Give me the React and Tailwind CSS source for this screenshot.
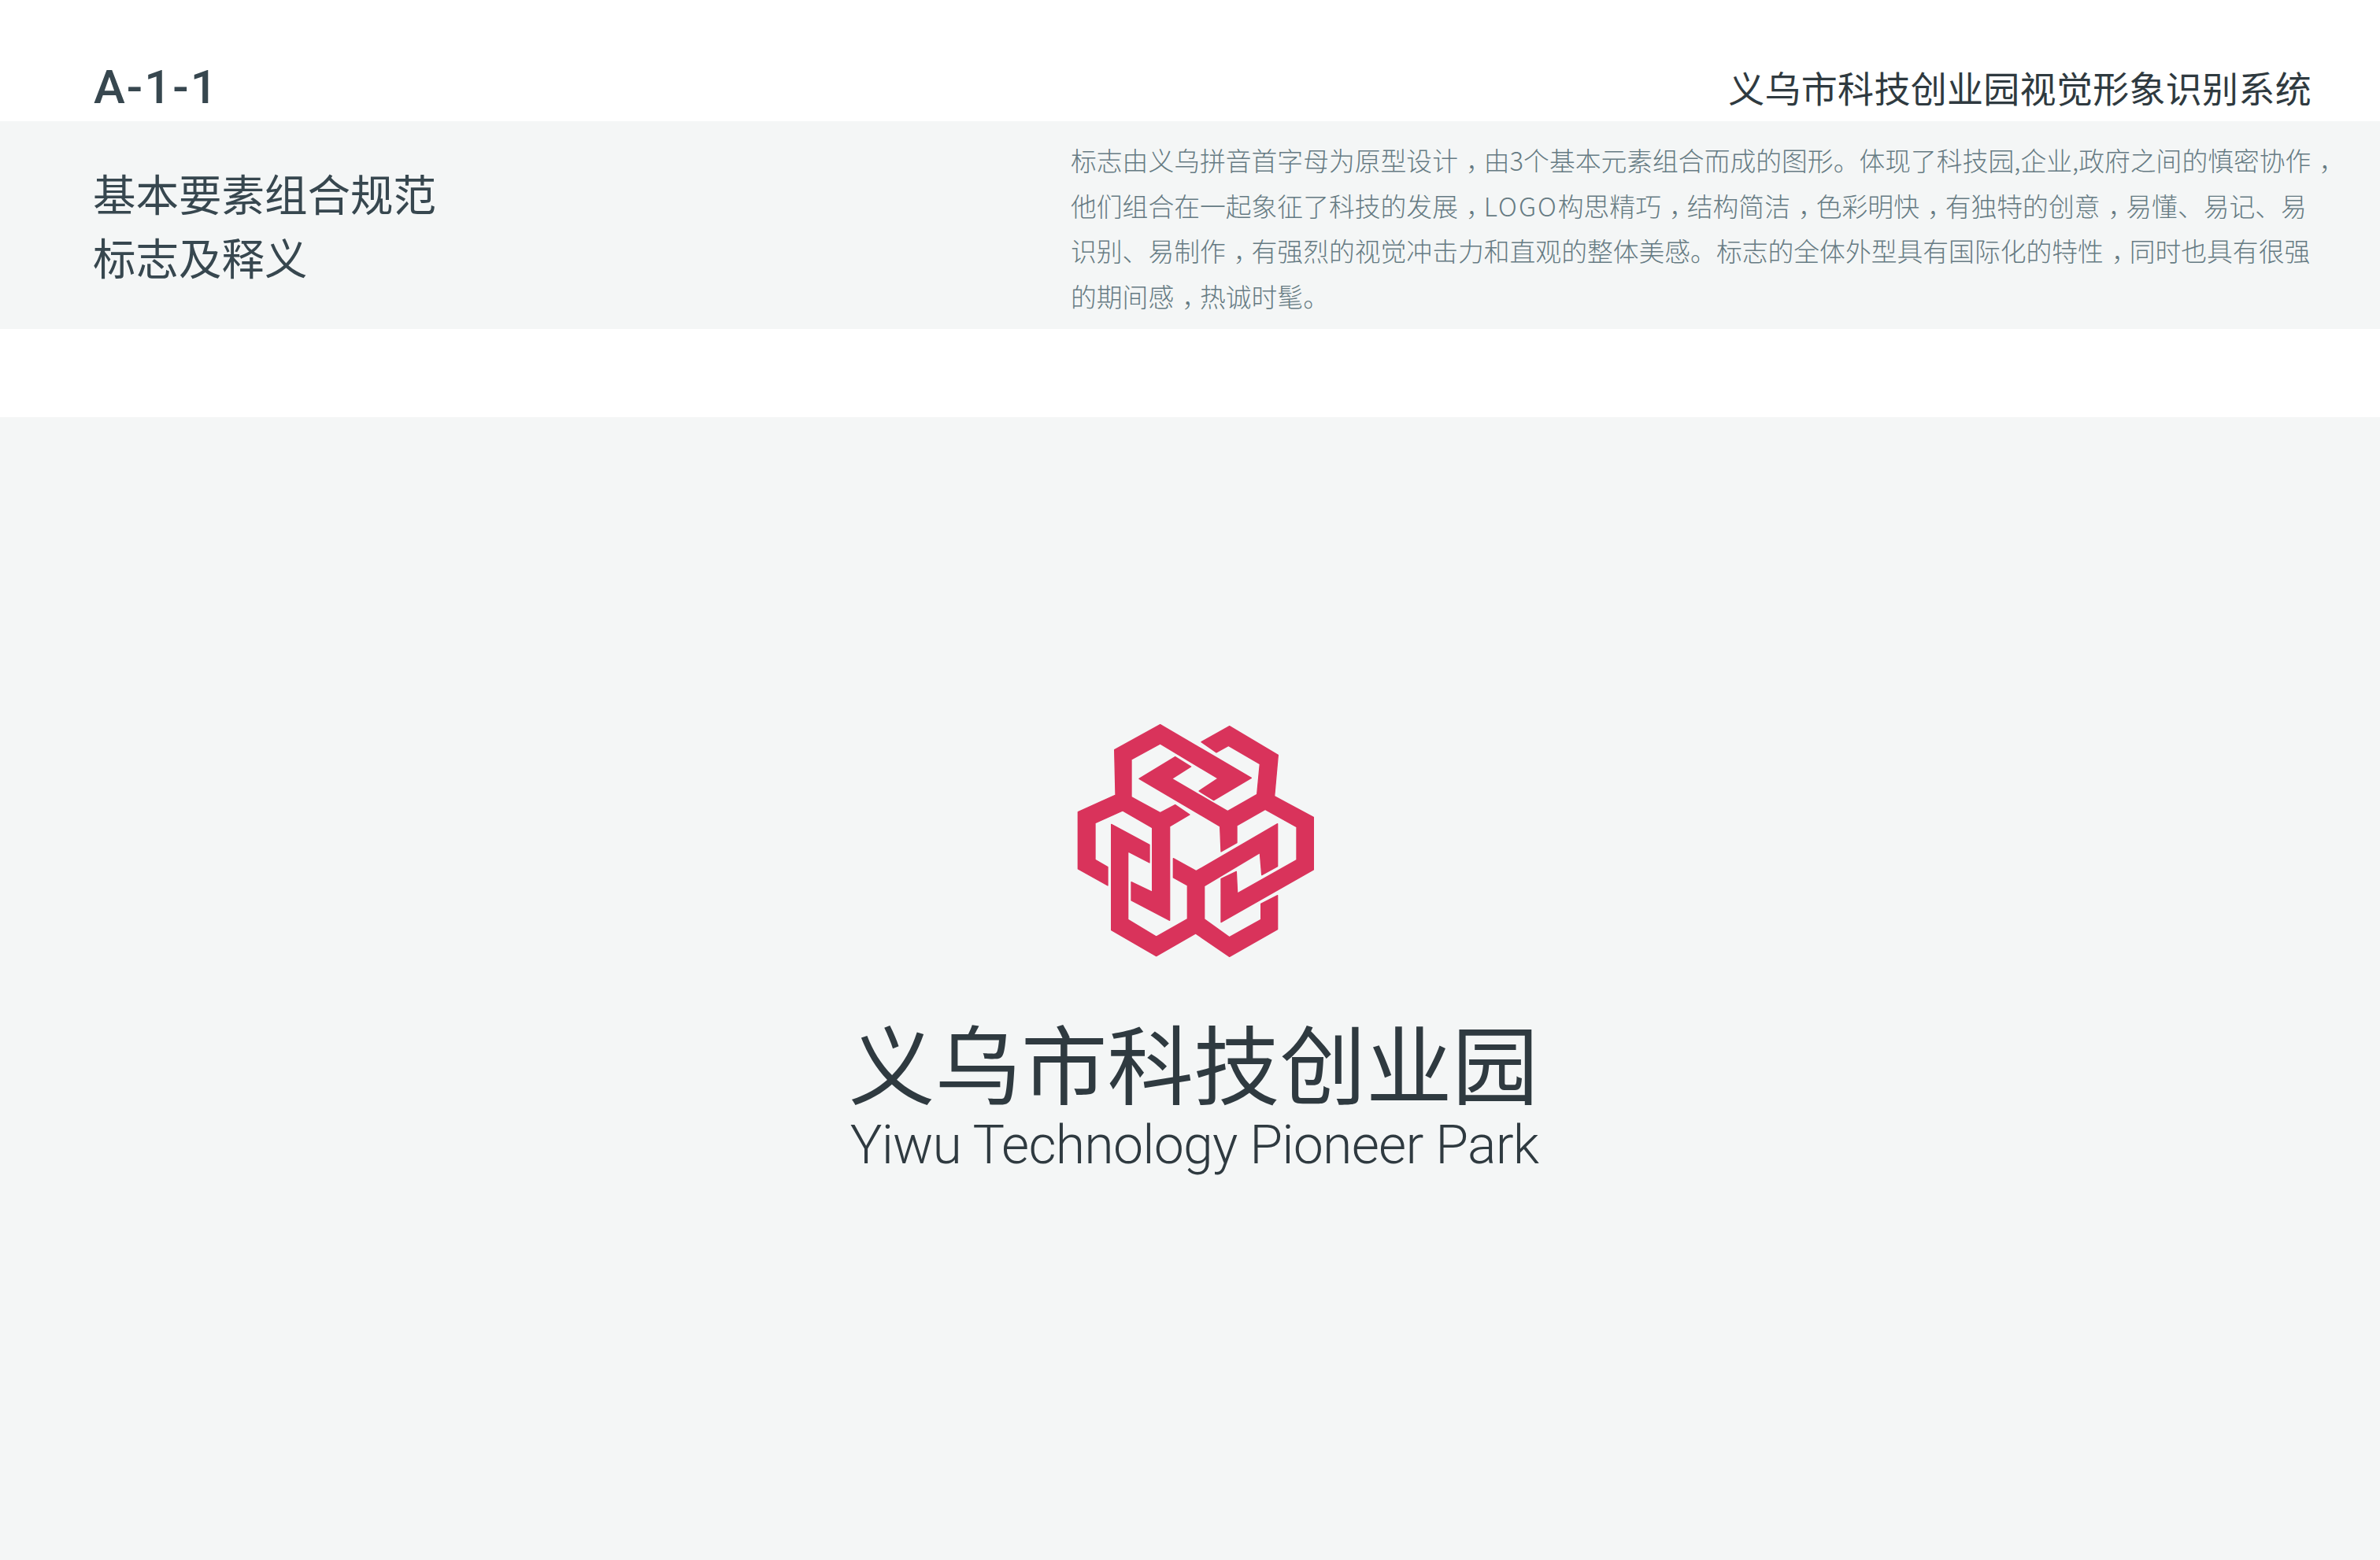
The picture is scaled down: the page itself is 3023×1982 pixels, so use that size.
const CJK = '"Noto Sans CJK SC", "Noto Sans", sans-serif';

const bodyLines = [
  '标志由义乌拼音首字母为原型设计，由3个基本元素组合而成的图形。体现了科技园,企业,政府之间的慎密协作，',
  '他们组合在一起象征了科技的发展，LOGO构思精巧，结构简洁，色彩明快，有独特的创意，易懂、易记、易',
  '识别、易制作，有强烈的视觉冲击力和直观的整体美感。标志的全体外型具有国际化的特性，同时也具有很强',
  '的期间感，热诚时髦。',
];

// three interlocked arms, traced at 3x
const Logo = () => (
  <svg className="ml-[3px]" width="360" height="340" viewBox="0 0 1080 1020" fill="#d9335b" stroke="#d9335b" strokeWidth="4" strokeLinejoin="round">
    <polygon points="555,128 662,68 847,178 833,335 982,415 982,615 630,815 630,650 688,622 692,705 918,578 918,452 798,385 690,447 690,512 630,546 626,450 318,268 455,185 515,222 442,268 655,392 767,328 778,212 658,142 612,168" />
    <polygon points="398,62 745,265 602,350 546,315 618,267 398,135 288,195 288,338 398,398 455,368 510,405 434,450 434,808 288,732 288,662 368,700 368,455 255,390 150,437 150,577 198,605 198,675 85,612 85,395 228,330 224,158" />
    <polygon points="212,442 357,520 357,588 280,548 275,548 275,805 383,870 502,803 502,675 448,645 448,572 535,620 845,440 845,602 785,635 778,550 566,677 566,803 662,872 782,805 782,745 845,713 845,842 662,946 533,858 383,944 212,845" />
  </svg>
);

// the commas sit centred in their cell in the reference, and LOGO runs a bit wider
const BodyLine = ({ text }) => {
  const parts = text.split('，');
  return (
    <div>
      {parts.map((part, i) => (
        <span key={i}>
          {part.includes('LOGO') ? (
            <>
              <span className="tracking-[2px]">LOGO</span>
              {part.replace('LOGO', '')}
            </>
          ) : (
            part
          )}
          {i < parts.length - 1 && <span className="pl-[10px] pr-[6.4px] [font-feature-settings:'halt']">，</span>}
        </span>
      ))}
    </div>
  );
};

export default function App() {
  return (
    <div className="flex h-[1982px] w-full flex-col bg-white" style={{ fontFamily: CJK }}>
      <header className="flex h-[154px] items-start justify-between pl-[119px] pr-[87px]">
        <span className="mt-[78px] font-['Roboto'] text-[60px] leading-[66px] font-medium tracking-[2px] text-[#37474f]">A-1-1</span>
        <span className="mt-[82px] text-[46px] leading-[56px] font-normal tracking-[0.3px] text-[#2f3a40]">义乌市科技创业园视觉形象识别系统</span>
      </header>

      <section className="flex h-[264px] bg-[#f4f6f6]">
        <h1 className="w-[1360px] pl-[118px] pt-[50px] text-[54.5px] leading-[81px] font-normal text-[#37474f]">
          基本要素组合规范<br />标志及释义
        </h1>
        <div className="pt-[20px] text-[32.8px] leading-[57.6px] font-light whitespace-nowrap text-[#667b83]">
          {bodyLines.map((line) => (
            <BodyLine key={line} text={line} />
          ))}
        </div>
      </section>

      <div className="h-[112px]" />

      <main className="flex flex-1 flex-col items-center bg-[#f4f6f6] pl-[15px] pt-[370px]">
        <Logo />
        <div className="mr-[6px] mt-[45px] text-[109.5px] leading-[126px] font-normal whitespace-nowrap text-[#2f3a40]">义乌市科技创业园</div>
        <div className="mr-[4px] mt-[2px] font-['Roboto'] text-[68px] leading-[84px] font-light tracking-[-0.8px] whitespace-nowrap text-[#2f3a40]">
          Yiwu Technology Pioneer Park
        </div>
      </main>
    </div>
  );
}
